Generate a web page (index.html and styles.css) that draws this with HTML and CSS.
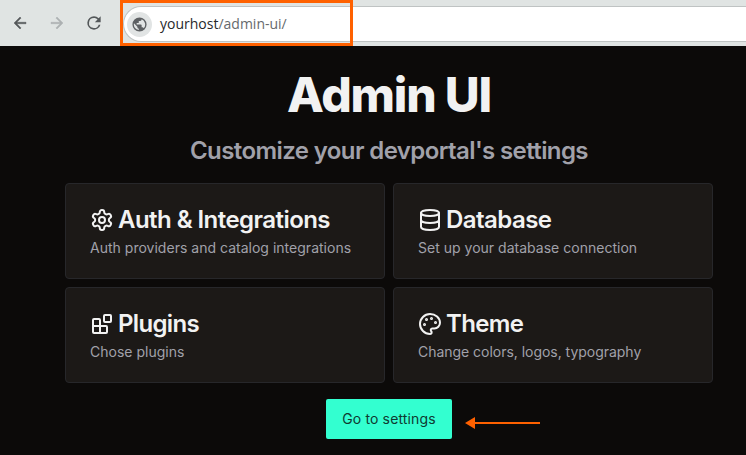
FILE: index.html
```html
<!DOCTYPE html>
<html lang="en">
<head>
<meta charset="utf-8">
<title>Admin UI</title>
<link rel="stylesheet" href="styles.css">
</head>
<body>
<header class="toolbar">
  <nav class="nav">
    <svg class="nav-icon" viewBox="0 0 24 24"><path d="M20 11H7.83l5.59-5.59L12 4l-8 8 8 8 1.41-1.41L7.83 13H20z"/></svg>
    <svg class="nav-icon nav-disabled" viewBox="0 0 24 24"><path d="M12 4l-1.41 1.41L16.17 11H4v2h12.17l-5.58 5.59L12 20l8-8z"/></svg>
    <svg class="nav-icon" viewBox="0 0 24 24"><path d="M17.65 6.35A7.96 7.96 0 0 0 12 4a8 8 0 1 0 7.73 10h-2.08A6 6 0 1 1 12 6c1.66 0 3.14.69 4.22 1.78L13 11h7V4z"/></svg>
  </nav>
  <div class="address">
    <span class="site"><svg viewBox="0 0 24 24"><path d="M12 2a10 10 0 1 0 0 20 10 10 0 0 0 0-20zm-1 17.93A8 8 0 0 1 4.21 10.21L9 15v1a2 2 0 0 0 2 2zm6.9-2.54A2 2 0 0 0 16 16h-1v-3a1 1 0 0 0-1-1H8v-2h2a1 1 0 0 0 1-1V7h2a2 2 0 0 0 2-2v-.41a8 8 0 0 1 2.9 12.8z"/></svg></span>
    <span class="url">yourhost<span class="path">/admin-ui/</span></span>
  </div>
  <div class="highlight"></div>
</header>
<main class="page">
  <h1>Admin UI</h1>
  <p class="subtitle">Customize your devportal's settings</p>
  <section class="cards">
    <article class="card">
      <h2><svg class="icon" viewBox="0 0 24 24"><path d="M12.22 2h-.44a2 2 0 0 0-2 2v.18a2 2 0 0 1-1 1.73l-.43.25a2 2 0 0 1-2 0l-.15-.08a2 2 0 0 0-2.73.73l-.22.38a2 2 0 0 0 .73 2.73l.15.1a2 2 0 0 1 1 1.72v.51a2 2 0 0 1-1 1.74l-.15.09a2 2 0 0 0-.73 2.73l.22.38a2 2 0 0 0 2.73.73l.15-.08a2 2 0 0 1 2 0l.43.25a2 2 0 0 1 1 1.73V20a2 2 0 0 0 2 2h.44a2 2 0 0 0 2-2v-.18a2 2 0 0 1 1-1.73l.43-.25a2 2 0 0 1 2 0l.15.08a2 2 0 0 0 2.73-.73l.22-.39a2 2 0 0 0-.73-2.73l-.15-.08a2 2 0 0 1-1-1.74v-.5a2 2 0 0 1 1-1.74l.15-.09a2 2 0 0 0 .73-2.73l-.22-.38a2 2 0 0 0-2.73-.73l-.15.08a2 2 0 0 1-2 0l-.43-.25a2 2 0 0 1-1-1.73V4a2 2 0 0 0-2-2z"/><circle cx="12" cy="12" r="3"/></svg><span class="wide">Auth &amp; Integrations</span></h2>
      <p>Auth providers and catalog integrations</p>
    </article>
    <article class="card">
      <h2><svg class="icon" viewBox="0 0 24 24"><ellipse cx="12" cy="5" rx="9" ry="3"/><path d="M3 5v14a9 3 0 0 0 18 0V5M3 12a9 3 0 0 0 18 0"/></svg><span class="wide">Database</span></h2>
      <p>Set up your database connection</p>
    </article>
    <article class="card">
      <h2><svg class="icon" viewBox="0 0 24 24"><rect x="14" y="3" width="7" height="7" rx="1"/><path d="M10 21V8a1 1 0 0 0-1-1H4a1 1 0 0 0-1 1v12a1 1 0 0 0 1 1h12a1 1 0 0 0 1-1v-5a1 1 0 0 0-1-1H3"/></svg>Plugins</h2>
      <p>Chose plugins</p>
    </article>
    <article class="card">
      <h2><svg class="icon" viewBox="0 0 24 24"><g class="dots"><circle cx="13.5" cy="6.5" r=".5"/><circle cx="17.5" cy="10.5" r=".5"/><circle cx="8.5" cy="7.5" r=".5"/><circle cx="6.5" cy="12.5" r=".5"/></g><path d="M12 2C6.5 2 2 6.5 2 12s4.5 10 10 10c.926 0 1.648-.746 1.648-1.688 0-.437-.18-.835-.437-1.125-.29-.289-.438-.652-.438-1.125a1.64 1.64 0 0 1 1.668-1.668h1.996c3.051 0 5.555-2.503 5.555-5.554C21.965 6.012 17.461 2 12 2z"/></svg>Theme</h2>
      <p class="snug">Change colors, logos, typography</p>
    </article>
  </section>
  <div class="actions">
    <button class="go">Go to settings</button>
    <svg class="arrow" viewBox="0 0 75 12"><path d="M0 6 10 0v12zM9 5h66v2H9z"/></svg>
  </div>
</main>
</body>
</html>
```
FILE: styles.css
```css
* { box-sizing: border-box; }
body { margin: 0; height: 455px; overflow: hidden; background: #0c0a09; font-family: Inter, sans-serif; color: #f2f2f2; }
h1, h2, p { margin: 0; }
.toolbar { position: relative; display: flex; align-items: center; height: 46px; background: #e0e4e3; }
.nav { display: flex; gap: 19px; width: 123px; padding-left: 11px; }
.nav-icon { width: 18px; height: 18px; fill: #54585a; stroke: #54585a; stroke-width: .6; }
.nav-icon:last-child { width: 20px; height: 20px; margin: -1px 0 0 -1px; stroke-width: 0; }
.nav-disabled { fill: #adb1b2; stroke: #adb1b2; }
.address { display: flex; align-items: center; flex: 1; height: 36px; margin-top: 2px; padding-left: 3px; background: #fff; border: 1px solid #bfc3c3; border-right: 0; border-radius: 18px 0 0 18px; }
.site { display: flex; align-items: center; justify-content: center; width: 25px; height: 25px; border-radius: 50%; background: #e1e4e4; }
.site svg { width: 17px; height: 17px; fill: #5d6063; }
.url { margin-left: 8px; font: 14px/20px "Open Sans", sans-serif; color: #27292b; }
.path { color: #66696c; }
.highlight { position: absolute; left: 120px; top: 0; width: 233px; height: 46px; border: 3px solid #ff6100; }
.page { display: flex; flex-direction: column; align-items: center; width: 648px; margin-left: 65px; padding-top: 25px; }
h1 { font-size: 48px; line-height: 48px; font-weight: 800; letter-spacing: -1.2px; }
.subtitle { margin-top: 16px; font-size: 24px; line-height: 32px; font-weight: 600; letter-spacing: -.6px; color: #a1a1aa; }
.cards { display: grid; grid-template-columns: 320px 320px; grid-auto-rows: 96px; gap: 8px; margin-top: 16px; }
.card { padding: 20px 24px; background: #1c1917; border: 1px solid #27272a; border-radius: 4px; }
.card h2 { display: flex; align-items: center; gap: 4px; font-size: 24px; line-height: 32px; font-weight: 620; letter-spacing: -.65px; }
.card .wide { letter-spacing: -.55px; }
.card p { margin-top: 2px; font-size: 14px; line-height: 20px; letter-spacing: .015px; color: #a1a1aa; }
.card .snug { letter-spacing: -.03px; }
.icon { width: 24px; height: 24px; fill: none; stroke: currentColor; stroke-width: 2; stroke-linecap: round; stroke-linejoin: round; }
.dots { fill: currentColor; }
.actions { position: relative; margin-top: 16px; }
.go { display: block; width: 126px; height: 40px; padding: 0; border: 0; border-radius: 2px; background: #33ffd0; color: #0f3a30; font: 400 14px/20px Inter, sans-serif; letter-spacing: .15px; }
.arrow { position: absolute; left: 139px; top: 18px; width: 75px; height: 12px; fill: #ff6100; }
```
